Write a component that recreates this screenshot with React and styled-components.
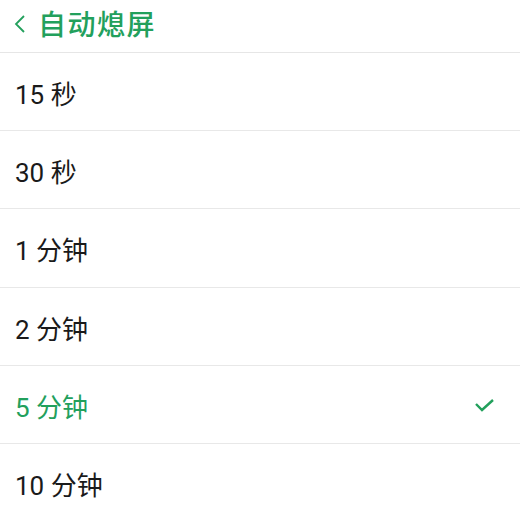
import React from "react";
import styled, { createGlobalStyle } from "styled-components";

const GlobalStyle = createGlobalStyle`
  body {
    margin: 0;
    background: #fff;
    font-family: Roboto, "Noto Sans CJK SC", sans-serif;
  }
`;

const Page = styled.div`
  width: 520px;
  height: 518px;
  overflow: hidden;
  background: #fff;
`;

const Header = styled.div`
  display: flex;
  align-items: center;
  height: 53px;
  padding: 0 0 0 12px;
  border-bottom: 1px solid #e6e6e6;
  box-sizing: border-box;
  color: #22a05c;
`;

const Back = styled.svg`
  width: 16px;
  height: 22px;
  margin-right: 10px;
  margin-top: -4px;
`;

const Title = styled.h1`
  margin: 0;
  margin-top: -6px;
  font-size: 28px;
  font-weight: 500;
  letter-spacing: 1.5px;
`;

const Row = styled.div`
  display: flex;
  align-items: center;
  justify-content: space-between;
  height: 78.2px;
  padding: 2px 25px 0 15px;
  border-bottom: 1px solid #e8e8e8;
  box-sizing: border-box;
  font-size: 26px;
  color: ${(p) => (p.$active ? "#22a05c" : "#1a1a1a")};
`;

const Check = styled.svg`
  width: 21px;
  height: 16px;
`;

const options = ["15 秒", "30 秒", "1 分钟", "2 分钟", "5 分钟", "10 分钟"];

export default function App() {
  return (
    <Page>
      <GlobalStyle />
      <Header>
        <Back viewBox="0 0 16 22">
          <path d="M12 3 L4 11 L12 19" fill="none" stroke="#22a05c" strokeWidth="1.8" />
        </Back>
        <Title>自动熄屏</Title>
      </Header>
      {options.map((o) => (
        <Row key={o} $active={o === "5 分钟"}>
          <span>{o}</span>
          {o === "5 分钟" && (
            <Check viewBox="0 0 21 16">
              <path d="M2 7 L8 13 L19 3" fill="none" stroke="#22a05c" strokeWidth="2.4" />
            </Check>
          )}
        </Row>
      ))}
    </Page>
  );
}
